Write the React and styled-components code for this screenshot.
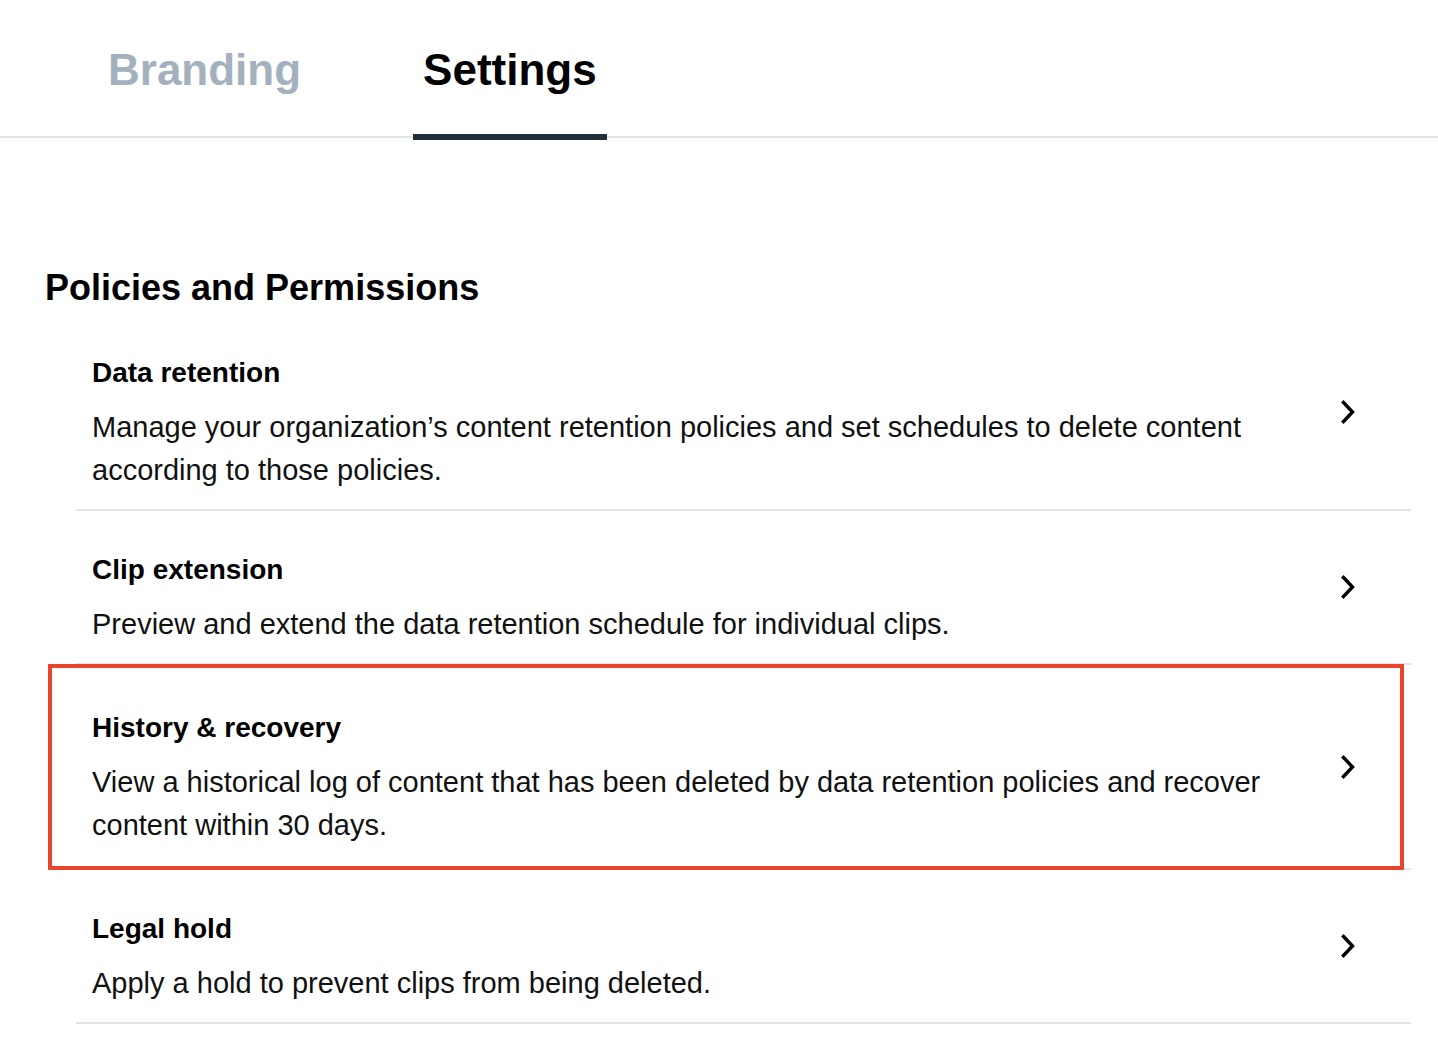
import React from "react";
import styled, { createGlobalStyle } from "styled-components";

const GlobalStyle = createGlobalStyle`
   body {
      margin: 0;
      background: #fff;
      font-family: "Liberation Sans", Helvetica, Arial, sans-serif;
      color: #000;
   }
`;

const items = [
   {
      title: "Data retention",
      text: "Manage your organization’s content retention policies and set schedules to delete content according to those policies.",
   },
   {
      title: "Clip extension",
      text: "Preview and extend the data retention schedule for individual clips.",
   },
   {
      title: "History & recovery",
      text: "View a historical log of content that has been deleted by data retention policies and recover content within 30 days.",
      highlight: true,
   },
   {
      title: "Legal hold",
      text: "Apply a hold to prevent clips from being deleted.",
   },
];

const Chevron = () => (
   <svg width="14" height="24" viewBox="0 0 14 24" fill="none">
      <polyline
         points="2.5,2.5 11.5,12 2.5,21.5"
         stroke="#000"
         strokeWidth="3.4"
         strokeLinecap="square"
         strokeLinejoin="miter"
      />
   </svg>
);

const App = () => {
   return (
      <>
         <GlobalStyle />
         <TabBar>
            <Tab>Branding</Tab>
            <Tab active>Settings</Tab>
         </TabBar>
         <Main>
            <Heading>Policies and Permissions</Heading>
            <List>
               {items.map((item) => (
                  <Row key={item.title} highlight={item.highlight}>
                     <Texts>
                        <h3>{item.title}</h3>
                        <p>{item.text}</p>
                     </Texts>
                     <Chevron />
                  </Row>
               ))}
            </List>
         </Main>
      </>
   );
};

export default App;

const TabBar = styled.nav`
   display: flex;
   gap: 102px;
   padding-left: 98px;
   border-bottom: 2px solid #e1e5e8;
`;

const Tab = styled.div.withConfig({
   shouldForwardProp: (p) => p !== "active",
})`
   padding: 45px 10px 39px;
   margin-bottom: -4px;
   font-size: 44px;
   line-height: 50px;
   font-weight: 700;
   color: ${(p) => (p.active ? "#000" : "#a3b1bf")};
   border-bottom: 6px solid ${(p) => (p.active ? "#232f38" : "transparent")};
   cursor: pointer;
`;

const Main = styled.main`
   padding: 129px 27px 0 0;
`;

const Heading = styled.h2`
   margin: 0 0 5px 45px;
   font-size: 36px;
   line-height: 42px;
   font-weight: 700;
`;

const List = styled.div`
   margin-left: 76px;
`;

const Row = styled.div.withConfig({
   shouldForwardProp: (p) => p !== "highlight",
})`
   position: relative;
   display: flex;
   align-items: center;
   gap: 40px;
   padding: ${(p) => (p.highlight ? "4px 56px 4px 16px" : "0 56px 0 16px")};
   border-bottom: 2px solid #e1e5e8;
   cursor: pointer;
   svg {
      flex-shrink: 0;
   }
   &::after {
      content: "";
      display: ${(p) => (p.highlight ? "block" : "none")};
      position: absolute;
      top: -1px;
      bottom: -2px;
      left: -28px;
      right: 7px;
      border: 4px solid #e9442e;
      pointer-events: none;
   }
`;

const Texts = styled.div`
   flex: 1;
   padding: 44px 0 17px;
   h3 {
      margin: 0 0 18px;
      font-size: 28px;
      line-height: 30px;
      font-weight: 700;
   }
   p {
      margin: 0;
      font-size: 29px;
      line-height: 43px;
      color: #111;
   }
`;
